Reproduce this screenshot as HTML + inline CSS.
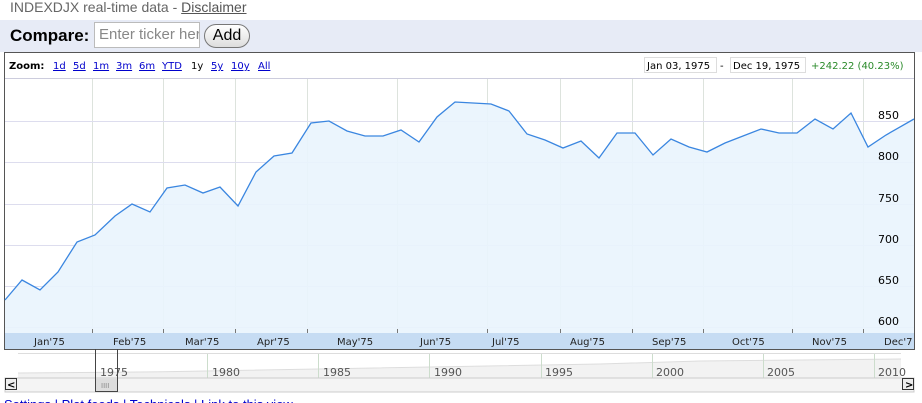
<!DOCTYPE html>
<html><head><style>
body{margin:0;width:922px;height:403px;overflow:hidden;background:#fff;font-family:"Liberation Sans",sans-serif;position:relative}
.a{position:absolute}
</style></head><body>
<div class="a" style="left:10px;top:-1px;font-size:14px;color:#666">INDEXDJX real-time data - <span style="text-decoration:underline;color:#555">Disclaimer</span></div>
<div class="a" style="left:0;top:20px;width:922px;height:32px;background:#e7ebf6"></div>
<div class="a" style="left:10px;top:26px;font-size:17px;font-weight:bold;color:#000">Compare:</div>
<div class="a" style="left:94px;top:22px;border:1px solid #bbb;background:#fff;font-size:15px;color:#888;line-height:24px;padding-left:4px;overflow:hidden;white-space:nowrap;box-sizing:border-box;width:106px;height:26px">Enter ticker her</div>
<div class="a" style="left:204px;top:24px;width:44px;height:22px;border:1px solid #777;border-radius:12px;background:linear-gradient(#fff,#ddd);font-size:16px;text-align:center;line-height:22px">Add</div>
<svg class="a" style="left:0;top:52px" width="922" height="351" font-family="DejaVu Sans, sans-serif">
<rect x="4.5" y="0.5" width="910" height="297" fill="#fff" stroke="#555"/>
<text x="9" y="17" font-size="10" font-weight="bold">Zoom:</text>
<g font-size="10" fill="#00c" text-decoration="underline"><text x="53" y="17">1d</text><text x="73" y="17">5d</text><text x="93" y="17">1m</text><text x="116" y="17">3m</text><text x="139" y="17">6m</text><text x="162" y="17">YTD</text><text x="211" y="17">5y</text><text x="231" y="17">10y</text><text x="258" y="17">All</text></g>
<text x="191" y="17" font-size="10">1y</text>
<rect x="644.5" y="5.5" width="72" height="15" fill="#fff" stroke="#ddd"/><text x="647" y="17" font-size="10">Jan 03, 1975</text>
<text x="720" y="17" font-size="10">-</text>
<rect x="730.5" y="5.5" width="75" height="15" fill="#fff" stroke="#ddd"/><text x="733" y="17" font-size="10">Dec 19, 1975</text>
<text x="811" y="17" font-size="10" fill="#2a8a2a">+242.22 (40.23%)</text>
<line x1="5" y1="26.5" x2="914" y2="26.5" stroke="#ccd"/>
<g stroke="#dde3dd"><line x1="92.5" y1="27" x2="92.5" y2="281"/><line x1="163.5" y1="27" x2="163.5" y2="281"/><line x1="235.5" y1="27" x2="235.5" y2="281"/><line x1="307.5" y1="27" x2="307.5" y2="281"/><line x1="397.5" y1="27" x2="397.5" y2="281"/><line x1="487.5" y1="27" x2="487.5" y2="281"/><line x1="560.5" y1="27" x2="560.5" y2="281"/><line x1="632.5" y1="27" x2="632.5" y2="281"/><line x1="703.5" y1="27" x2="703.5" y2="281"/><line x1="792.5" y1="27" x2="792.5" y2="281"/><line x1="863.5" y1="27" x2="863.5" y2="281"/></g>
<g stroke="#dde"><line x1="5" y1="69.5" x2="914" y2="69.5"/><line x1="5" y1="110.5" x2="914" y2="110.5"/><line x1="5" y1="152.5" x2="914" y2="152.5"/><line x1="5" y1="193.5" x2="914" y2="193.5"/><line x1="5" y1="234.5" x2="914" y2="234.5"/><line x1="5" y1="275.5" x2="914" y2="275.5"/></g>
<polygon fill="#e9f4fd" opacity="0.9" points="5,248 22,228 40,238 58,220 77,190 95,183 115,164 132,152 150,160 167,136 185,133 203,141 220,135 238,154 256,120 274,104 292,101 311,71 329,69 347,79 365,84 383,84 401,78 419,90 437,65 455,50 473,51 491,52 509,59 527,82 545,88 563,96 581,89 599,106 617,81 635,81 653,103 671,87 689,95 707,100 725,91 743,84 761,77 779,81 797,81 815,67 833,77 851,61 868,95 886,83 914,67 914,281 5,281"/>
<polyline fill="none" stroke="#3a86e0" stroke-width="1.3" points="5,248 22,228 40,238 58,220 77,190 95,183 115,164 132,152 150,160 167,136 185,133 203,141 220,135 238,154 256,120 274,104 292,101 311,71 329,69 347,79 365,84 383,84 401,78 419,90 437,65 455,50 473,51 491,52 509,59 527,82 545,88 563,96 581,89 599,106 617,81 635,81 653,103 671,87 689,95 707,100 725,91 743,84 761,77 779,81 797,81 815,67 833,77 851,61 868,95 886,83 914,67"/>
<g font-size="11" fill="#000"><text x="878" y="67">850</text><text x="878" y="108">800</text><text x="878" y="150">750</text><text x="878" y="191">700</text><text x="878" y="232">650</text><text x="878" y="273">600</text></g>
<rect x="5" y="281" width="909" height="16" fill="#c6dcf3"/>
<g stroke="#777"><line x1="92.5" y1="277" x2="92.5" y2="281"/><line x1="163.5" y1="277" x2="163.5" y2="281"/><line x1="235.5" y1="277" x2="235.5" y2="281"/><line x1="307.5" y1="277" x2="307.5" y2="281"/><line x1="397.5" y1="277" x2="397.5" y2="281"/><line x1="487.5" y1="277" x2="487.5" y2="281"/><line x1="560.5" y1="277" x2="560.5" y2="281"/><line x1="632.5" y1="277" x2="632.5" y2="281"/><line x1="703.5" y1="277" x2="703.5" y2="281"/><line x1="792.5" y1="277" x2="792.5" y2="281"/><line x1="863.5" y1="277" x2="863.5" y2="281"/></g>
<g font-size="10" fill="#222"><text x="34" y="293">Jan'75</text><text x="113" y="293">Feb'75</text><text x="185" y="293">Mar'75</text><text x="257" y="293">Apr'75</text><text x="337" y="293">May'75</text><text x="420" y="293">Jun'75</text><text x="492" y="293">Jul'75</text><text x="570" y="293">Aug'75</text><text x="652" y="293">Sep'75</text><text x="732" y="293">Oct'75</text><text x="812" y="293">Nov'75</text><text x="884" y="293">Dec'7</text></g>
<line x1="18" y1="301.5" x2="901" y2="301.5" stroke="#ddd"/>
<rect x="18" y="302" width="883" height="24" fill="#fff"/>
<path d="M18,326 L18,321 C200,320 300,318 600,312 L700,309 L800,308 L901,307 L901,326Z" fill="#f2f2f2"/>
<path d="M18,321 C200,320 300,318 600,312 L700,309 L800,308 L901,307" fill="none" stroke="#ddd"/>
<g stroke="#cdc"><line x1="207.5" y1="302" x2="207.5" y2="326"/><line x1="318.5" y1="302" x2="318.5" y2="326"/><line x1="429.5" y1="302" x2="429.5" y2="326"/><line x1="541.5" y1="302" x2="541.5" y2="326"/><line x1="652.5" y1="302" x2="652.5" y2="326"/><line x1="763.5" y1="302" x2="763.5" y2="326"/><line x1="874.5" y1="302" x2="874.5" y2="326"/></g>
<g font-size="11" fill="#555"><text x="100" y="324">1975</text><text x="212" y="324">1980</text><text x="323" y="324">1985</text><text x="434" y="324">1990</text><text x="545" y="324">1995</text><text x="656" y="324">2000</text><text x="767" y="324">2005</text><text x="878" y="324">2010</text></g>
<rect x="5" y="326" width="909" height="14" fill="#f4f4f4" stroke="#ccc"/>
<rect x="5.5" y="326.5" width="11" height="11" fill="#eee" stroke="#333"/><text x="7" y="336" font-size="10" font-weight="bold">&lt;</text>
<rect x="902.5" y="326.5" width="11" height="11" fill="#eee" stroke="#333"/><text x="905" y="336" font-size="10" font-weight="bold">&gt;</text>
<path d="M95.5,297 V339.5 H117.5 V297" fill="none" stroke="#444"/>
<rect x="96" y="326" width="21" height="13" fill="#ddd"/>
<text x="101" y="336" font-size="7" fill="#888">IIII</text>
<text x="4" y="357" font-size="13" fill="#00c" font-family="Liberation Sans">Settings | Plot feeds | Technicals | Link to this view</text>
</svg>
</body></html>
